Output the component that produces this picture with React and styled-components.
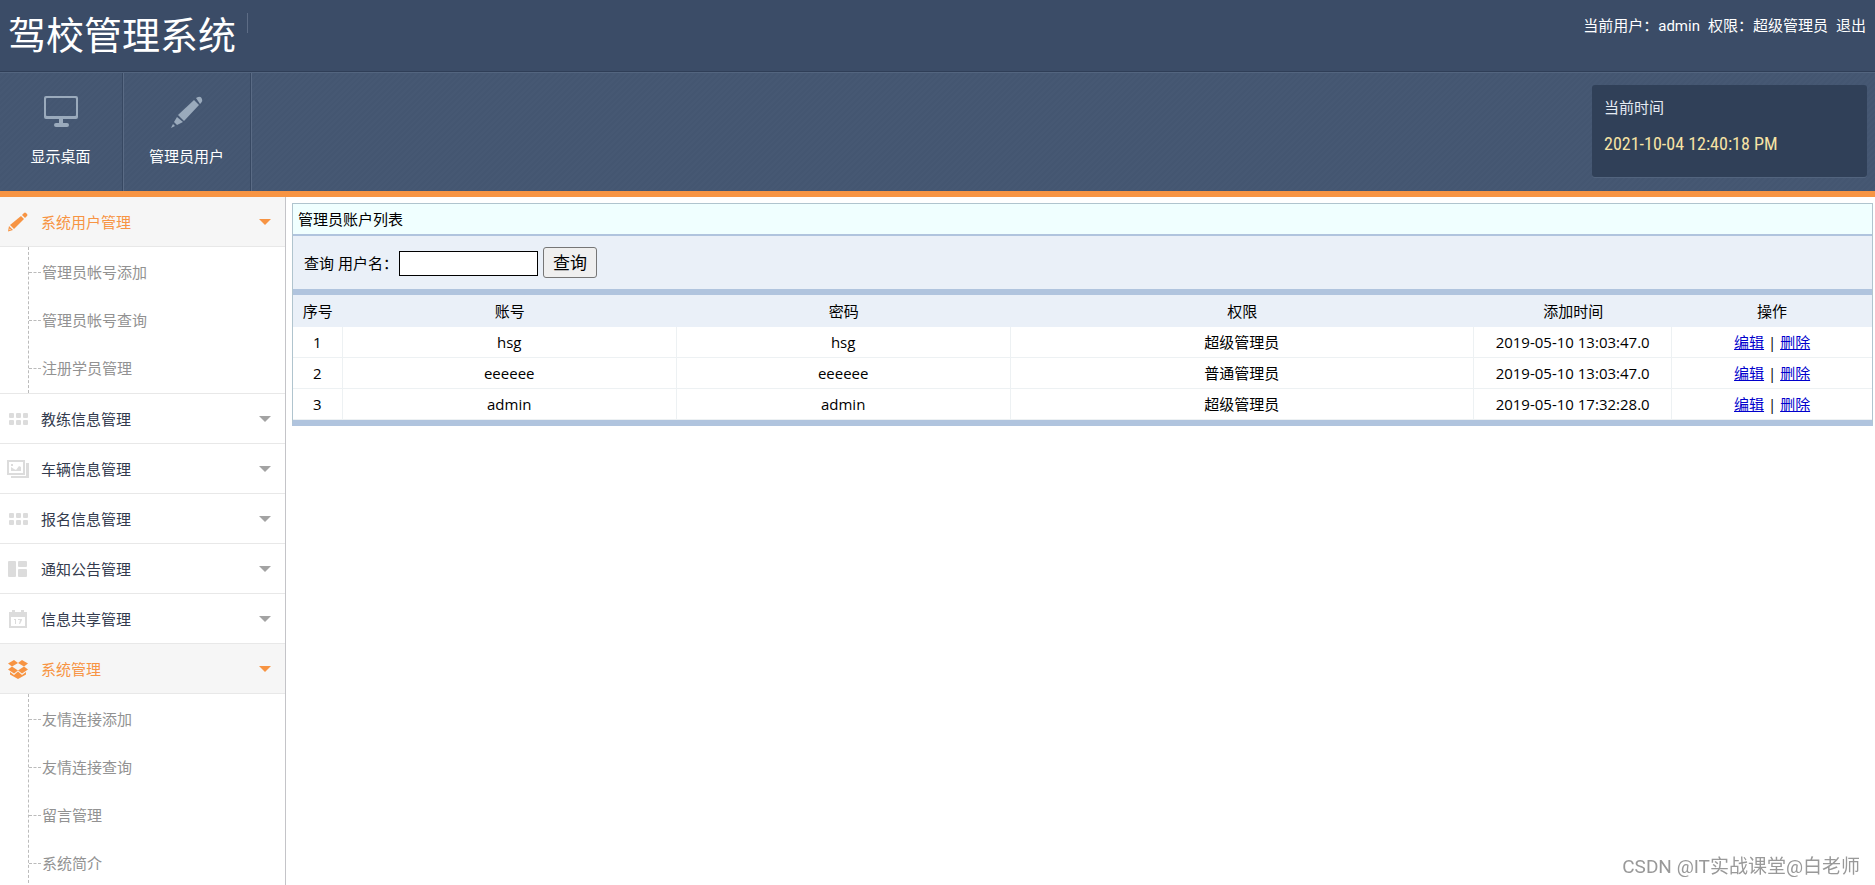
import React, { useState } from "react";
import styled, { createGlobalStyle, css } from "styled-components";

const GlobalStyle = createGlobalStyle`
  * {
    box-sizing: border-box;
  }

  body {
    margin: 0;
    background: #fff;
    color: #000;
    font-family: "Open Sans", "Noto Sans CJK SC", sans-serif;
    font-size: 15px;
    line-height: 20px;
  }

  ul {
    margin: 0;
    padding: 0;
    list-style: none;
  }

  button, input {
    font-family: inherit;
  }
`;

const Page = styled.div`
  height: 100vh;
  display: flex;
  flex-direction: column;
`;

/* header */

const TopBar = styled.header`
  height: 72px;
  flex-shrink: 0;
  display: flex;
  justify-content: space-between;
  align-items: flex-start;
  background: #3b4c67;
  border-bottom: 1px solid #2f3e57;
`;

const Brand = styled.h1`
  margin: 0;
  padding: 12px 11px 0 8px;
  color: #fff;
  font-size: 38px;
  font-weight: 400;
  line-height: 44px;
`;

const BrandGroup = styled.div`
  display: flex;
`;

const Divider = styled.span`
  width: 1px;
  height: 20px;
  margin-top: 13px;
  background: #5d6c85;
`;

const UserInfo = styled.div`
  display: flex;
  gap: 8px;
  padding: 16px 9px 0 0;
  color: #fff;
  font-family: Roboto, "Noto Sans CJK SC", sans-serif;

  a {
    color: #fff;
    text-decoration: none;
  }
`;

const ToolBar = styled.div`
  height: 125px;
  flex-shrink: 0;
  display: flex;
  justify-content: space-between;
  background: repeating-linear-gradient(135deg, #445671 0 2px, #465873 2px 4px);
  border-top: 1px solid #53657f;
  border-bottom: 6px solid #f79443;
`;

const Tools = styled.nav`
  display: flex;
`;

const Tool = styled.button`
  min-width: 124px;
  padding: 20px 27px 25px 25px;
  display: flex;
  flex-direction: column;
  align-items: center;
  justify-content: space-between;
  border: 0;
  border-right: 1px solid #5a6b85;
  box-shadow: inset -1px 0 #374862;
  background: none;
  color: #fff;
  font-size: 15px;
  line-height: 20px;
  cursor: pointer;

  svg {
    width: 36px;
    height: 36px;
    fill: #9aaabc;
  }
`;

const Clock = styled.div`
  width: 275px;
  height: 92px;
  margin: 12px 8px 0 0;
  padding: 12px;
  display: flex;
  flex-direction: column;
  gap: 17px;
  border-radius: 3px;
  background: #304058;
  box-shadow: 0 1px #52647e;
  color: #e4eaf2;

  time {
    color: #f7e3a5;
    font-family: "Roboto Condensed", Roboto, sans-serif;
    font-size: 18px;
  }
`;

/* side menu */

const Body = styled.div`
  flex: 1;
  min-height: 0;
  display: flex;
`;

const Sidebar = styled.aside`
  width: 286px;
  flex-shrink: 0;
  overflow: hidden;
  border-right: 1px solid #c4c4c8;
`;

const MenuButton = styled.button`
  width: 100%;
  height: 50px;
  padding: 0 14px 0 7px;
  display: flex;
  align-items: center;
  border: 0;
  border-bottom: 1px solid #e8e8e8;
  background: #fff;
  color: #333b4e;
  font-size: 15px;
  text-align: left;
  cursor: pointer;

  svg {
    width: 22px;
    height: 22px;
    margin-right: 12px;
    fill: #dcdcdc;
  }

  &::after {
    content: "";
    margin-left: auto;
    border: 6px solid transparent;
    border-top-color: #a3a3a3;
    border-bottom: 0;
  }

  ${props =>
    props.$open &&
    css`
      background: #f6f6f6;
      color: #f79443;

      svg {
        fill: #f79443;
      }

      &::after {
        border-top-color: #f79443;
      }
    `}
`;

const SubMenu = styled.div`
  padding-left: 28px;
  border-bottom: 1px solid #e8e8e8;

  ul {
    padding: 1px 0;
    border-left: 1px dashed #bbb;
  }

  li {
    height: 48px;
    display: flex;
    align-items: center;
  }

  li::before {
    content: "";
    width: 12px;
    margin-right: 1px;
    border-top: 1px dashed #bbb;
  }

  a {
    color: #929292;
    text-decoration: none;
  }
`;

/* content */

const Content = styled.main`
  flex: 1;
  padding: 6px 2px 0 6px;
`;

const Panel = styled.section`
  border: 1px solid #b0c4ce;
  border-bottom: 6px solid #b0c4de;
`;

const PanelTitle = styled.h2`
  margin: 0;
  padding: 5px;
  border-bottom: 2px solid #b0c4de;
  background: #f0ffff;
  font-size: 15px;
  font-weight: 400;
  line-height: 20px;
`;

const SearchForm = styled.form`
  height: 59px;
  padding: 0 11px;
  display: flex;
  align-items: center;
  border-bottom: 6px solid #b0c4de;
  background: #eaf0f8;

  input {
    width: 139px;
    height: 25px;
    margin: 2px 5px 0 1px;
    border: 1px solid #000;
    background: #fff;
    font-size: 15px;
  }

  button {
    height: 31px;
    padding: 0 9px;
    border: 1px solid #767676;
    border-radius: 3px;
    background: #efefef;
    font-size: 17px;
    line-height: 20px;
  }
`;

const Table = styled.table`
  width: 100%;
  table-layout: fixed;
  border-collapse: separate;
  border-spacing: 0;
  text-align: center;

  th {
    height: 32px;
    padding: 0;
    background: #eaf0f8;
    font-weight: 400;
  }

  td {
    height: 31px;
    padding: 0;
    border-bottom: 1px solid #edf1f3;
    border-right: 1px solid #edf1f3;
  }

  td:last-child {
    border-right: 0;
  }

  a {
    color: #0000cc;
  }
`;

const Col = styled.col`
  width: ${props => props.$width};
`;

const Watermark = styled.div`
  position: fixed;
  right: 15px;
  bottom: 4px;
  color: #999;
  font-family: Roboto, "Noto Sans CJK SC", sans-serif;
  font-size: 19px;
  line-height: 28px;
`;

/* icons */

const MonitorIcon = () => (
  <svg viewBox="0 0 36 36" aria-hidden="true">
    <path
      fillRule="evenodd"
      d="M3 3h30a2 2 0 0 1 2 2v19a2 2 0 0 1-2 2H20v4h4a2 2 0 0 1 0 4H13a2 2 0 0 1 0-4h3v-4H3a2 2 0 0 1-2-2V5a2 2 0 0 1 2-2zm1 2a1 1 0 0 0-1 1v16a1 1 0 0 0 1 1h28a1 1 0 0 0 1-1V6a1 1 0 0 0-1-1z"
    />
  </svg>
);

const CrayonIcon = () => (
  <svg viewBox="0 0 36 36" aria-hidden="true">
    <path d="M27 5l2-1q3-1 4 2 1 2-1 4l-1 1z" />
    <path d="M25 7l5 5-15 16-6-6z" />
    <path d="M8 24l6 5-6 3-3-3z" />
    <path d="M4 31l2 2-4 2z" />
  </svg>
);

const PencilIcon = () => (
  <svg viewBox="0 0 22 22" aria-hidden="true">
    <path d="M15 4l2-2q1-1 2 0l1 1q1 1 0 2l-2 2z" />
    <path d="M14 5l3 3L7 18l-4-4z" />
    <path fillRule="evenodd" d="M2 15l4 4-5 1.500zM2.500 17.500v1.500h1.500z" />
  </svg>
);

const GridIcon = () => (
  <svg viewBox="0 0 22 22" aria-hidden="true">
    {[2, 9, 16].map(x => (
      <g key={x}>
        <rect x={x} y="5" width="5" height="5" rx="1" />
        <rect x={x} y="12" width="5" height="5" rx="1" />
      </g>
    ))}
  </svg>
);

const PicturesIcon = () => (
  <svg viewBox="0 0 22 22" aria-hidden="true">
    <path fillRule="evenodd" d="M0 2h18v15H0zm2 2v11h14V4z" />
    <path d="M19 5h3v15H4v-2h15z" />
    <path d="M4 6h2v2H4zm0 7V9l3 2 2 1 3-4 2 1v4z" />
  </svg>
);

const BlocksIcon = () => (
  <svg viewBox="0 0 22 22" aria-hidden="true">
    <rect x="1" y="3" width="8" height="16" rx="1" />
    <rect x="11" y="3" width="9" height="6" rx="1" />
    <rect x="11" y="11" width="9" height="8" rx="1" />
  </svg>
);

const CalendarIcon = () => (
  <svg viewBox="0 0 22 22" aria-hidden="true">
    <path
      fillRule="evenodd"
      d="M3 4h2V2h3v2h6V2h3v2h3v16H2V4zm1 5v9h14V9z"
    />
    <path d="M7 11h2v5H8v-4H7zm4 0h4v1l-2 4h-1l1-4h-2z" />
  </svg>
);

const BoxIcon = () => (
  <svg viewBox="0 0 22 22" aria-hidden="true">
    <path d="M7 2l4 3-6 3.500L1 5.500z" />
    <path d="M15 2l6 3.500-4 3L11 5z" />
    <path d="M5 8.500l6 4-4 3-6-4z" />
    <path d="M17 8.500l4 3-6 4-4-3z" />
    <path d="M3 14l4 3 4-3.500 4 3.500 4-3v2.500L11 21l-8-4.500z" />
  </svg>
);

const menu = [
  {
    title: "系统用户管理",
    icon: PencilIcon,
    items: ["管理员帐号添加", "管理员帐号查询", "注册学员管理"]
  },
  { title: "教练信息管理", icon: GridIcon, items: [] },
  { title: "车辆信息管理", icon: PicturesIcon, items: [] },
  { title: "报名信息管理", icon: GridIcon, items: [] },
  { title: "通知公告管理", icon: BlocksIcon, items: [] },
  { title: "信息共享管理", icon: CalendarIcon, items: [] },
  {
    title: "系统管理",
    icon: BoxIcon,
    items: ["友情连接添加", "友情连接查询", "留言管理", "系统简介"]
  }
];

const columns = [
  { title: "序号", width: "3.15%" },
  { title: "账号", width: "21.15%" },
  { title: "密码", width: "21.15%" },
  { title: "权限", width: "29.35%" },
  { title: "添加时间", width: "12.55%" },
  { title: "操作", width: "12.65%" }
];

const users = [
  { name: "hsg", password: "hsg", role: "超级管理员", time: "2019-05-10 13:03:47.0" },
  { name: "eeeeee", password: "eeeeee", role: "普通管理员", time: "2019-05-10 13:03:47.0" },
  { name: "admin", password: "admin", role: "超级管理员", time: "2019-05-10 17:32:28.0" }
];

const SideMenu = () => {
  const [open, setOpen] = useState({ 系统用户管理: true, 系统管理: true });

  const toggle = title => setOpen({ ...open, [title]: !open[title] });

  return (
    <Sidebar>
      {menu.map(({ title, icon: Icon, items }) => (
        <div key={title}>
          <MenuButton
            type="button"
            $open={open[title]}
            aria-expanded={!!open[title]}
            onClick={() => toggle(title)}
          >
            <Icon />
            {title}
          </MenuButton>
          {open[title] && items.length > 0 && (
            <SubMenu>
              <ul>
                {items.map(item => (
                  <li key={item}>
                    <a href="#">{item}</a>
                  </li>
                ))}
              </ul>
            </SubMenu>
          )}
        </div>
      ))}
    </Sidebar>
  );
};

const UserTable = () => (
  <Table>
    <colgroup>
      {columns.map(col => (
        <Col key={col.title} $width={col.width} />
      ))}
    </colgroup>
    <thead>
      <tr>
        {columns.map(col => (
          <th key={col.title} scope="col">
            {col.title}
          </th>
        ))}
      </tr>
    </thead>
    <tbody>
      {users.map((user, i) => (
        <tr key={user.name}>
          <td>{i + 1}</td>
          <td>{user.name}</td>
          <td>{user.password}</td>
          <td>{user.role}</td>
          <td>{user.time}</td>
          <td>
            <a href="#">编辑</a> | <a href="#">删除</a>
          </td>
        </tr>
      ))}
    </tbody>
  </Table>
);

const App = () => (
  <Page>
    <GlobalStyle />
    <TopBar>
      <BrandGroup>
        <Brand>驾校管理系统</Brand>
        <Divider />
      </BrandGroup>
      <UserInfo>
        <span>当前用户：admin</span>
        <span>权限：超级管理员</span>
        <a href="#">退出</a>
      </UserInfo>
    </TopBar>
    <ToolBar>
      <Tools>
        <Tool type="button">
          <MonitorIcon />
          显示桌面
        </Tool>
        <Tool type="button">
          <CrayonIcon />
          管理员用户
        </Tool>
      </Tools>
      <Clock>
        <span>当前时间</span>
        <time>2021-10-04 12:40:18 PM</time>
      </Clock>
    </ToolBar>
    <Body>
      <SideMenu />
      <Content>
        <Panel>
          <PanelTitle>管理员账户列表</PanelTitle>
          <SearchForm onSubmit={e => e.preventDefault()}>
            <label htmlFor="username">查询 用户名：</label>
            <input id="username" type="text" />
            <button type="submit">查询</button>
          </SearchForm>
          <UserTable />
        </Panel>
      </Content>
    </Body>
    <Watermark>CSDN @IT实战课堂@白老师</Watermark>
  </Page>
);

export default App;
